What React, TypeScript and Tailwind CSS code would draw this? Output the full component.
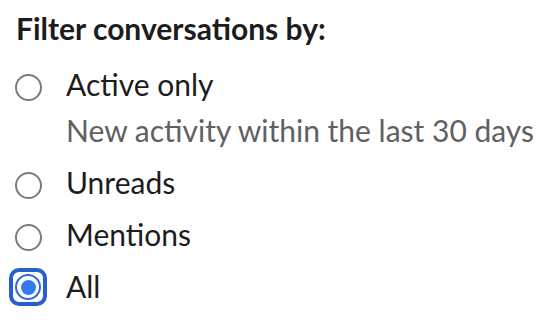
import React, { useState } from "react"

interface Option {
  id: string
  label: string
  hint?: string
}

const options: Option[] = [
  { id: "active", label: "Active only", hint: "New activity within the last 30 days" },
  { id: "unreads", label: "Unreads" },
  { id: "mentions", label: "Mentions" },
  { id: "all", label: "All" },
]

function Radio({ checked }: { checked: boolean }) {
  if (checked) {
    // focused + checked: blue focus ring around the radio
    return (
      <span className="-mt-[8px] flex h-[38px] w-[38px] shrink-0 items-center justify-center rounded-[10px] border-4 border-[#2560cf] bg-white">
        <span className="flex h-[26px] w-[26px] items-center justify-center rounded-full border-[2.5px] border-[#2f6be0] bg-white">
          <span className="h-[15px] w-[15px] rounded-full bg-[#3579f3]" />
        </span>
      </span>
    )
  }
  return <span className="block h-[27px] w-[27px] shrink-0 rounded-full border-2 border-[#7b7b7b] bg-white" />
}

export default function App() {
  const [selected, setSelected] = useState("all")

  return (
    <div className="h-[326px] w-[554px] bg-white pl-4 pt-[10px] font-['Lato',sans-serif] text-[#1d1c1d]">
      <h2 className="text-[30px] font-bold leading-[36px]">Filter conversations by:</h2>
      <div className="mt-[20px] flex flex-col gap-[16px]">
        {options.map((opt) => (
          <label key={opt.id} className="flex cursor-pointer items-start" onClick={() => setSelected(opt.id)}>
            <span className="flex h-[36px] w-[50px] shrink-0 items-start justify-center pt-[8px] pr-[26px]">
              <Radio checked={selected === opt.id} />
            </span>
            <span className="flex flex-col">
              <span className="text-[30px] leading-[36px]">{opt.label}</span>
              {opt.hint && <span className="mt-[10px] text-[30px] leading-[36px] text-[#616061]">{opt.hint}</span>}
            </span>
          </label>
        ))}
      </div>
    </div>
  )
}
